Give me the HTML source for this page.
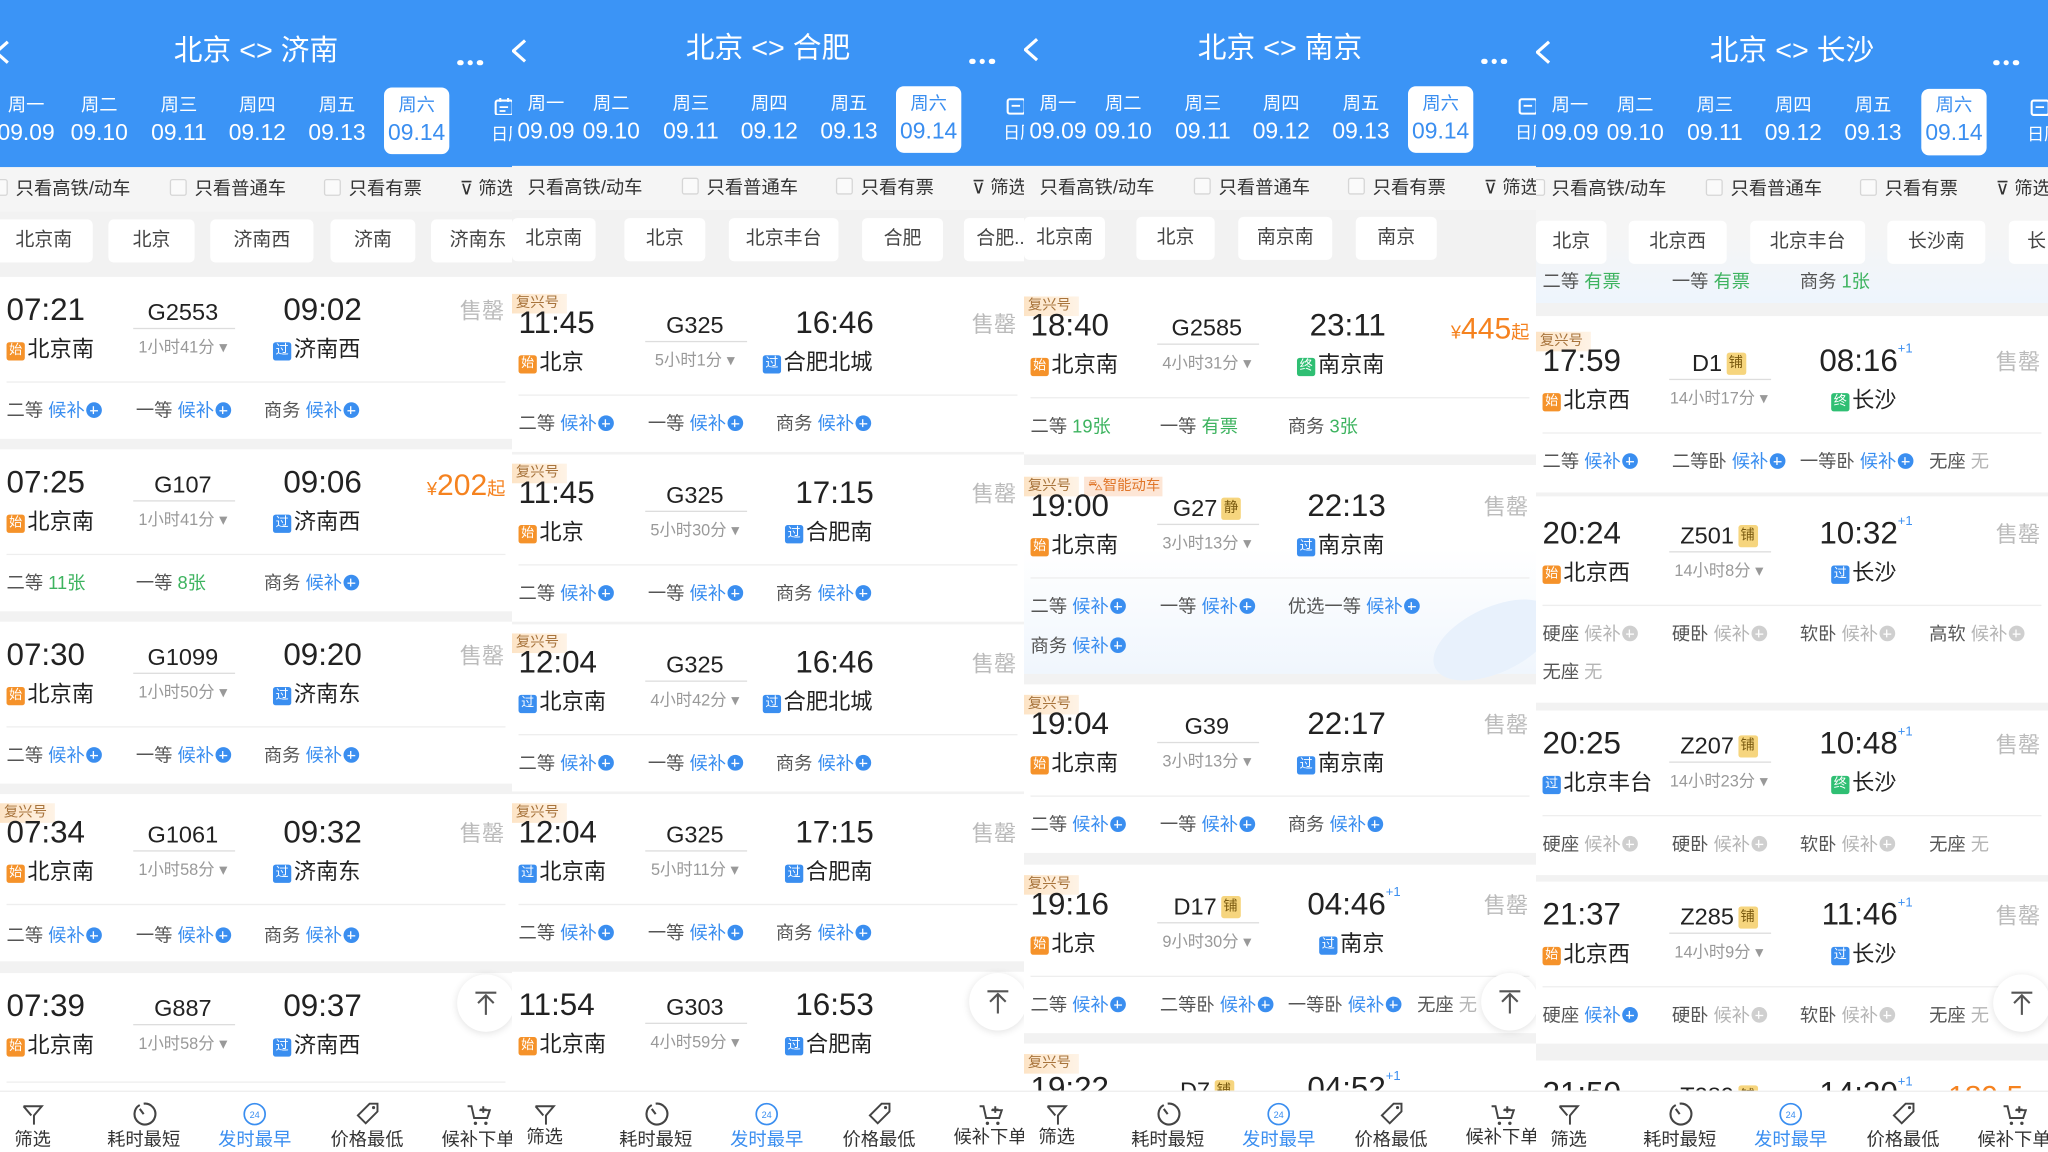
<!DOCTYPE html>
<html><head><meta charset="utf-8">
<style>
*{margin:0;padding:0;box-sizing:border-box}
html,body{width:2048px;height:1152px;overflow:hidden;background:#f2f2f2}
body{font-family:"Liberation Sans","Noto Sans CJK SC",sans-serif;position:relative}
#w{position:absolute;left:0;top:0;width:1568px;height:882px;overflow:hidden;transform:scale(1.30612);transform-origin:0 0}
.p{position:absolute;top:0;width:392px;height:882px;overflow:hidden;background:#f2f2f2}
.p div,.p span.a{position:absolute;white-space:nowrap}
.hd{left:0;top:0;width:392px;height:128px;background:#3b94f6}
.ti{left:0;width:392px;top:25px;text-align:center;color:#fff;font-size:22px;line-height:28px}
.dots{left:350px;top:37px;width:24px;height:5px}
.dots i{display:inline-block;width:4.5px;height:4.5px;border-radius:50%;background:#fff;margin-right:3px}
.wd{top:71px;width:56px;text-align:center;color:#fff;font-size:14px;line-height:18px}
.dd{top:90px;width:56px;text-align:center;color:#fff;font-size:17.5px;line-height:22px}
.sel{left:294px;top:67px;width:50px;height:51px;background:#fff;border-radius:6px}
.fr{left:0;top:128px;width:392px;height:34px;background:#f5f5f5}
.ft{top:135px;font-size:14px;color:#333;line-height:18px}
.cb{top:137px;width:13px;height:13px;border:1px solid #d6d6d6;background:#fafafa;border-radius:2px}
.ch{top:168px;height:33px;background:#fff;border-radius:4px;font-size:14.5px;color:#444;line-height:33px;text-align:center}
.c{left:0;width:392px;height:0}
.c .bg{left:0;width:392px;top:-28px;height:124px;background:#fff}
.tag{left:0;top:-25px;height:15px;width:42px;padding-left:3px;font-size:11px;line-height:15px;color:#a8743c;background:linear-gradient(90deg,#fde4c6,#fef3e6)}
.dt{left:5px;top:-16px;font-size:24px;line-height:28px;color:#222}
.tn{left:90px;width:100px;text-align:center;top:-12px;font-size:18px;line-height:22px;color:#222}
.ln{left:102px;width:78px;top:11px;height:1px;background:#ddd}
.du{left:90px;width:100px;text-align:center;top:18px;font-size:12.5px;color:#999;line-height:16px}
.at{right:115px;top:-16px;font-size:24px;line-height:28px;color:#222;text-align:right}
.at sup{position:absolute;left:100%;top:-1px;font-size:10px;color:#3a8ef0;line-height:12px}
.s1{left:5px;top:17px;font-size:17px;line-height:22px;color:#222}
.s2{right:116px;top:17px;font-size:17px;line-height:22px;color:#222}
.bd{display:inline-block;width:14px;height:14px;border-radius:2px;color:#fff;font-size:10px;line-height:14px;text-align:center;vertical-align:2px;margin-right:2px}
.o{background:#f5922a}.b{background:#3a8ef0}.gg{background:#2fbf73}
.jp{display:inline-block;width:15px;height:17px;border-radius:2px;background:#f6d57e;color:#7a5a10;font-size:11px;line-height:17px;text-align:center;vertical-align:3px;margin-left:3px}
.pr{right:6px;top:-12px;font-size:17px;color:#bbb;line-height:22px}
.pz{right:5px;top:-15px;color:#f5821f;font-size:23px;line-height:28px}
.pz small{font-size:14px}
.dv{left:5px;width:382px;top:52px;height:1px;background:#eee}
.s{left:0;width:392px;height:18px;font-size:14px;line-height:18px;color:#555}
.s i{position:absolute;font-style:normal;white-space:nowrap}
.h{color:#3a8ef0}.gn{color:#3db35f}.x{color:#b5b5b5}
u{display:inline-block;width:12px;height:12px;border-radius:50%;background:#3a8ef0;position:relative;vertical-align:-1px;margin-left:1px;text-decoration:none}
u:before{content:"";position:absolute;left:3px;top:5.5px;width:6px;height:1.2px;background:#fff}
u:after{content:"";position:absolute;left:5.4px;top:3px;width:1.2px;height:6px;background:#fff}
.x u{background:#cfcfcf}
.bar{left:0;top:835px;width:392px;height:47px;background:#fff;border-top:1px solid #eee}
.bi{top:845px;width:70px;text-align:center}
.bl{top:862px;width:70px;text-align:center;font-size:14px;color:#333;line-height:20px}
.up{width:44px;height:44px;border-radius:50%;background:#fff;box-shadow:0 1px 6px rgba(0,0,0,.12)}
.cal{top:72px;width:14px;height:14px}
</style></head><body><div id="w">

<!-- PANEL 1 -->
<div class="p" style="left:0">
<div class="hd"></div>
<svg class="a" style="position:absolute;left:-6px;top:30px" width="16" height="20"><polyline points="12,2 3,10 12,18" fill="none" stroke="#fff" stroke-width="2.4"/></svg>
<div class="ti">北京 &lt;&gt; 济南</div>
<div class="dots"><i></i><i></i><i></i></div>
<div class="sel"></div>
<div class="wd" style="left:-8px">周一</div><div class="dd" style="left:-8px">09.09</div>
<div class="wd" style="left:48px">周二</div><div class="dd" style="left:48px">09.10</div>
<div class="wd" style="left:109px">周三</div><div class="dd" style="left:109px">09.11</div>
<div class="wd" style="left:169px">周四</div><div class="dd" style="left:169px">09.12</div>
<div class="wd" style="left:230px">周五</div><div class="dd" style="left:230px">09.13</div>
<div class="wd" style="left:291px;color:#3a8ef0">周六</div><div class="dd" style="left:291px;color:#3a8ef0">09.14</div>
<svg class="cal" style="position:absolute;left:378px;top:74px" width="16" height="16"><rect x="1.5" y="3" width="13" height="11" rx="1.5" fill="none" stroke="#fff" stroke-width="1.6"/><line x1="5" y1="1" x2="5" y2="4" stroke="#fff" stroke-width="1.6"/><line x1="11" y1="1" x2="11" y2="4" stroke="#fff" stroke-width="1.6"/><line x1="4.5" y1="8" x2="11" y2="8" stroke="#fff" stroke-width="1.4"/><line x1="4.5" y1="11" x2="9" y2="11" stroke="#fff" stroke-width="1.4"/></svg>
<div style="left:376px;top:92px;color:#fff;font-size:13px">日历</div>
<div class="fr"></div>
<div class="cb" style="left:-7px"></div><div class="ft" style="left:12px">只看高铁/动车</div>
<div class="cb" style="left:130px"></div><div class="ft" style="left:149px">只看普通车</div>
<div class="cb" style="left:248px"></div><div class="ft" style="left:267px">只看有票</div>
<div class="ft" style="left:352px">&#x22BD; 筛选</div>
<div class="ch" style="left:-4px;width:75px">北京南</div>
<div class="ch" style="left:83px;width:66px">北京</div>
<div class="ch" style="left:161px;width:79px">济南西</div>
<div class="ch" style="left:253px;width:65px">济南</div>
<div class="ch" style="left:330px;width:72px">济南东</div>

<div class="c" style="top:240px"><div class="bg"></div>
<div class="dt">07:21</div><div class="tn">G2553</div><div class="ln"></div><div class="du">1小时41分 ▾</div><div class="at">09:02</div>
<div class="s1"><span class="bd o">始</span>北京南</div><div class="s2"><span class="bd b">过</span>济南西</div><div class="pr">售罄</div><div class="dv"></div>
<div class="s" style="top:65px"><i style="left:5px">二等 <span class="h">候补<u></u></span></i><i style="left:104px">一等 <span class="h">候补<u></u></span></i><i style="left:202px">商务 <span class="h">候补<u></u></span></i></div></div>

<div class="c" style="top:372px"><div class="bg"></div>
<div class="dt">07:25</div><div class="tn">G107</div><div class="ln"></div><div class="du">1小时41分 ▾</div><div class="at">09:06</div>
<div class="s1"><span class="bd o">始</span>北京南</div><div class="s2"><span class="bd b">过</span>济南西</div><div class="pz"><small>¥</small>202<small>起</small></div><div class="dv"></div>
<div class="s" style="top:65px"><i style="left:5px">二等 <span class="gn">11张</span></i><i style="left:104px">一等 <span class="gn">8张</span></i><i style="left:202px">商务 <span class="h">候补<u></u></span></i></div></div>

<div class="c" style="top:504px"><div class="bg"></div>
<div class="dt">07:30</div><div class="tn">G1099</div><div class="ln"></div><div class="du">1小时50分 ▾</div><div class="at">09:20</div>
<div class="s1"><span class="bd o">始</span>北京南</div><div class="s2"><span class="bd b">过</span>济南东</div><div class="pr">售罄</div><div class="dv"></div>
<div class="s" style="top:65px"><i style="left:5px">二等 <span class="h">候补<u></u></span></i><i style="left:104px">一等 <span class="h">候补<u></u></span></i><i style="left:202px">商务 <span class="h">候补<u></u></span></i></div></div>

<div class="c" style="top:640px"><div class="bg" style="top:-32px;height:128px"></div><div class="tag">复兴号</div>
<div class="dt">07:34</div><div class="tn">G1061</div><div class="ln"></div><div class="du">1小时58分 ▾</div><div class="at">09:32</div>
<div class="s1"><span class="bd o">始</span>北京南</div><div class="s2"><span class="bd b">过</span>济南东</div><div class="pr">售罄</div><div class="dv"></div>
<div class="s" style="top:67px"><i style="left:5px">二等 <span class="h">候补<u></u></span></i><i style="left:104px">一等 <span class="h">候补<u></u></span></i><i style="left:202px">商务 <span class="h">候补<u></u></span></i></div></div>

<div class="c" style="top:773px"><div class="bg"></div>
<div class="dt">07:39</div><div class="tn">G887</div><div class="ln"></div><div class="du">1小时58分 ▾</div><div class="at">09:37</div>
<div class="s1"><span class="bd o">始</span>北京南</div><div class="s2"><span class="bd b">过</span>济南西</div><div class="dv" style="top:55px"></div></div>
<div class="up" style="left:350px;top:746px"></div>
<svg style="position:absolute;left:362px;top:758px" width="20" height="20"><line x1="2" y1="2" x2="18" y2="2" stroke="#555" stroke-width="1.6"/><line x1="10" y1="4" x2="10" y2="19" stroke="#555" stroke-width="1.6"/><polyline points="4,10 10,4 16,10" fill="none" stroke="#555" stroke-width="1.6"/></svg>

<div class="bar"></div>
<svg class="a" style="position:absolute;left:16px;top:844px" width="18" height="18"><path d="M2 3H16L10 10V17M8 10L2 3" fill="none" stroke="#444" stroke-width="1.5"/></svg>
<svg class="a" style="position:absolute;left:100px;top:843px" width="20" height="20"><path d="M7 3A8 8 0 1 0 10 2" fill="none" stroke="#444" stroke-width="1.6"/><line x1="10" y1="10" x2="7" y2="6" stroke="#444" stroke-width="1.6"/></svg>
<svg class="a" style="position:absolute;left:185px;top:843px" width="20" height="20"><circle cx="10" cy="10" r="8" fill="none" stroke="#3a8ef0" stroke-width="1.3"/><text x="10" y="13" font-size="7" fill="#3a8ef0" text-anchor="middle" font-family="Liberation Sans">24</text></svg>
<svg class="a" style="position:absolute;left:271px;top:842px" width="22" height="22"><path d="M3 12L12 3H18V9L9 18Z" fill="none" stroke="#444" stroke-width="1.5"/><circle cx="15" cy="6" r="1.2" fill="#444"/></svg>
<svg class="a" style="position:absolute;left:356px;top:843px" width="22" height="22"><path d="M2 4H5L7 13H17L19 7H11M14 4V9M11.5 6.5H16.5" fill="none" stroke="#444" stroke-width="1.5"/><circle cx="8" cy="17" r="1.3" fill="#444"/><circle cx="16" cy="17" r="1.3" fill="#444"/></svg>
<div class="bl" style="left:-10px">筛选</div><div class="bl" style="left:75px">耗时最短</div><div class="bl" style="left:160px;color:#3a8ef0">发时最早</div><div class="bl" style="left:246px">价格最低</div><div class="bl" style="left:331px">候补下单</div>
</div>

<!-- PANEL 2 -->
<div class="p" style="left:392px">
<div class="hd"></div>
<svg style="position:absolute;left:-2px;top:29px" width="16" height="20"><polyline points="12,2 3,10 12,18" fill="none" stroke="#fff" stroke-width="2.4"/></svg>
<div class="ti" style="top:23px">北京 &lt;&gt; 合肥</div>
<div class="dots" style="top:36px"><i></i><i></i><i></i></div>
<div class="sel" style="top:66px"></div>
<div class="wd" style="left:-2px;top:70px">周一</div><div class="dd" style="left:-2px;top:89px">09.09</div>
<div class="wd" style="left:48px;top:70px">周二</div><div class="dd" style="left:48px;top:89px">09.10</div>
<div class="wd" style="left:109px;top:70px">周三</div><div class="dd" style="left:109px;top:89px">09.11</div>
<div class="wd" style="left:169px;top:70px">周四</div><div class="dd" style="left:169px;top:89px">09.12</div>
<div class="wd" style="left:230px;top:70px">周五</div><div class="dd" style="left:230px;top:89px">09.13</div>
<div class="wd" style="left:291px;top:70px;color:#3a8ef0">周六</div><div class="dd" style="left:291px;top:89px;color:#3a8ef0">09.14</div>
<svg style="position:absolute;left:378px;top:73px" width="16" height="16"><rect x="1.5" y="3" width="13" height="11" rx="1.5" fill="none" stroke="#fff" stroke-width="1.6"/><line x1="4.5" y1="8" x2="11" y2="8" stroke="#fff" stroke-width="1.4"/></svg>
<div style="left:376px;top:91px;color:#fff;font-size:13px">日历</div>
<div class="fr" style="top:127px"></div>
<div class="ft" style="left:12px;top:134px">只看高铁/动车</div>
<div class="cb" style="left:130px;top:136px"></div><div class="ft" style="left:149px;top:134px">只看普通车</div>
<div class="cb" style="left:248px;top:136px"></div><div class="ft" style="left:267px;top:134px">只看有票</div>
<div class="ft" style="left:352px;top:134px">&#x22BD; 筛选</div>
<div class="ch" style="left:0;width:64px;top:167px">北京南</div>
<div class="ch" style="left:86px;width:62px;top:167px">北京</div>
<div class="ch" style="left:166px;width:84px;top:167px">北京丰台</div>
<div class="ch" style="left:268px;width:62px;top:167px">合肥</div>
<div class="ch" style="left:346px;width:60px;top:167px">合肥...</div>

<div class="c" style="top:250px"><div class="bg" style="top:-38px;height:134px"></div><div class="tag">复兴号</div>
<div class="dt">11:45</div><div class="tn">G325</div><div class="ln"></div><div class="du">5小时1分 ▾</div><div class="at">16:46</div>
<div class="s1"><span class="bd o">始</span>北京</div><div class="s2"><span class="bd b">过</span>合肥北城</div><div class="pr">售罄</div><div class="dv"></div>
<div class="s" style="top:65px"><i style="left:5px">二等 <span class="h">候补<u></u></span></i><i style="left:104px">一等 <span class="h">候补<u></u></span></i><i style="left:202px">商务 <span class="h">候补<u></u></span></i></div></div>

<div class="c" style="top:380px"><div class="bg" style="top:-32px;height:128px"></div><div class="tag">复兴号</div>
<div class="dt">11:45</div><div class="tn">G325</div><div class="ln"></div><div class="du">5小时30分 ▾</div><div class="at">17:15</div>
<div class="s1"><span class="bd o">始</span>北京</div><div class="s2"><span class="bd b">过</span>合肥南</div><div class="pr">售罄</div><div class="dv"></div>
<div class="s" style="top:65px"><i style="left:5px">二等 <span class="h">候补<u></u></span></i><i style="left:104px">一等 <span class="h">候补<u></u></span></i><i style="left:202px">商务 <span class="h">候补<u></u></span></i></div></div>

<div class="c" style="top:510px"><div class="bg" style="top:-32px;height:128px"></div><div class="tag">复兴号</div>
<div class="dt">12:04</div><div class="tn">G325</div><div class="ln"></div><div class="du">4小时42分 ▾</div><div class="at">16:46</div>
<div class="s1"><span class="bd b">过</span>北京南</div><div class="s2"><span class="bd b">过</span>合肥北城</div><div class="pr">售罄</div><div class="dv"></div>
<div class="s" style="top:65px"><i style="left:5px">二等 <span class="h">候补<u></u></span></i><i style="left:104px">一等 <span class="h">候补<u></u></span></i><i style="left:202px">商务 <span class="h">候补<u></u></span></i></div></div>

<div class="c" style="top:640px"><div class="bg" style="top:-32px;height:128px"></div><div class="tag">复兴号</div>
<div class="dt">12:04</div><div class="tn">G325</div><div class="ln"></div><div class="du">5小时11分 ▾</div><div class="at">17:15</div>
<div class="s1"><span class="bd b">过</span>北京南</div><div class="s2"><span class="bd b">过</span>合肥南</div><div class="pr">售罄</div><div class="dv"></div>
<div class="s" style="top:65px"><i style="left:5px">二等 <span class="h">候补<u></u></span></i><i style="left:104px">一等 <span class="h">候补<u></u></span></i><i style="left:202px">商务 <span class="h">候补<u></u></span></i></div></div>

<div class="c" style="top:772px"><div class="bg"></div>
<div class="dt">11:54</div><div class="tn">G303</div><div class="ln"></div><div class="du">4小时59分 ▾</div><div class="at">16:53</div>
<div class="s1"><span class="bd o">始</span>北京南</div><div class="s2"><span class="bd b">过</span>合肥南</div><div class="pz"><small>¥</small>45</div></div>
<div class="up" style="left:350px;top:745px"></div>
<svg style="position:absolute;left:362px;top:757px" width="20" height="20"><line x1="2" y1="2" x2="18" y2="2" stroke="#555" stroke-width="1.6"/><line x1="10" y1="4" x2="10" y2="19" stroke="#555" stroke-width="1.6"/><polyline points="4,10 10,4 16,10" fill="none" stroke="#555" stroke-width="1.6"/></svg>

<div class="bar"></div>
<svg style="position:absolute;left:16px;top:844px" width="18" height="18"><path d="M2 3H16L10 10V17M8 10L2 3" fill="none" stroke="#444" stroke-width="1.5"/></svg>
<svg style="position:absolute;left:100px;top:843px" width="20" height="20"><path d="M7 3A8 8 0 1 0 10 2" fill="none" stroke="#444" stroke-width="1.6"/><line x1="10" y1="10" x2="7" y2="6" stroke="#444" stroke-width="1.6"/></svg>
<svg style="position:absolute;left:185px;top:843px" width="20" height="20"><circle cx="10" cy="10" r="8" fill="none" stroke="#3a8ef0" stroke-width="1.3"/><text x="10" y="13" font-size="7" fill="#3a8ef0" text-anchor="middle" font-family="Liberation Sans">24</text></svg>
<svg style="position:absolute;left:271px;top:842px" width="22" height="22"><path d="M3 12L12 3H18V9L9 18Z" fill="none" stroke="#444" stroke-width="1.5"/><circle cx="15" cy="6" r="1.2" fill="#444"/></svg>
<svg style="position:absolute;left:356px;top:843px" width="22" height="22"><path d="M2 4H5L7 13H17L19 7H11M14 4V9M11.5 6.5H16.5" fill="none" stroke="#444" stroke-width="1.5"/><circle cx="8" cy="17" r="1.3" fill="#444"/><circle cx="16" cy="17" r="1.3" fill="#444"/></svg>
<div class="bl" style="left:-10px;top:860px">筛选</div><div class="bl" style="left:75px">耗时最短</div><div class="bl" style="left:160px;color:#3a8ef0">发时最早</div><div class="bl" style="left:246px">价格最低</div><div class="bl" style="left:331px;top:860px">候补下单</div>
</div>

<!-- PANEL 3 -->
<div class="p" style="left:784px">
<div class="hd"></div>
<svg style="position:absolute;left:-2px;top:28px" width="16" height="20"><polyline points="12,2 3,10 12,18" fill="none" stroke="#fff" stroke-width="2.4"/></svg>
<div class="ti" style="top:23px">北京 &lt;&gt; 南京</div>
<div class="dots" style="top:36px"><i></i><i></i><i></i></div>
<div class="sel" style="top:66px"></div>
<div class="wd" style="left:-2px;top:70px">周一</div><div class="dd" style="left:-2px;top:89px">09.09</div>
<div class="wd" style="left:48px;top:70px">周二</div><div class="dd" style="left:48px;top:89px">09.10</div>
<div class="wd" style="left:109px;top:70px">周三</div><div class="dd" style="left:109px;top:89px">09.11</div>
<div class="wd" style="left:169px;top:70px">周四</div><div class="dd" style="left:169px;top:89px">09.12</div>
<div class="wd" style="left:230px;top:70px">周五</div><div class="dd" style="left:230px;top:89px">09.13</div>
<div class="wd" style="left:291px;top:70px;color:#3a8ef0">周六</div><div class="dd" style="left:291px;top:89px;color:#3a8ef0">09.14</div>
<svg style="position:absolute;left:378px;top:73px" width="16" height="16"><rect x="1.5" y="3" width="13" height="11" rx="1.5" fill="none" stroke="#fff" stroke-width="1.6"/><line x1="4.5" y1="8" x2="11" y2="8" stroke="#fff" stroke-width="1.4"/></svg>
<div style="left:376px;top:91px;color:#fff;font-size:13px">日历</div>
<div class="fr" style="top:127px"></div>
<div class="ft" style="left:12px;top:134px">只看高铁/动车</div>
<div class="cb" style="left:130px;top:136px"></div><div class="ft" style="left:149px;top:134px">只看普通车</div>
<div class="cb" style="left:248px;top:136px"></div><div class="ft" style="left:267px;top:134px">只看有票</div>
<div class="ft" style="left:352px;top:134px">&#x22BD; 筛选</div>
<div class="ch" style="left:0;width:62px;top:166px">北京南</div>
<div class="ch" style="left:86px;width:60px;top:166px">北京</div>
<div class="ch" style="left:164px;width:72px;top:166px">南京南</div>
<div class="ch" style="left:254px;width:62px;top:166px">南京</div>

<div class="c" style="top:252px"><div class="bg" style="top:-40px;height:136px"></div><div class="tag">复兴号</div>
<div class="dt">18:40</div><div class="tn">G2585</div><div class="ln"></div><div class="du">4小时31分 ▾</div><div class="at">23:11</div>
<div class="s1"><span class="bd o">始</span>北京南</div><div class="s2"><span class="bd gg">终</span>南京南</div><div class="pz"><small>¥</small>445<small>起</small></div><div class="dv"></div>
<div class="s" style="top:65px"><i style="left:5px">二等 <span class="gn">19张</span></i><i style="left:104px">一等 <span class="gn">有票</span></i><i style="left:202px">商务 <span class="gn">3张</span></i></div></div>

<div class="c" style="top:390px"><div class="bg" style="top:-34px;height:160px;background:linear-gradient(180deg,#fff 40%,#f0f6fd)"></div>
<div style="left:310px;top:75px;width:100px;height:50px;border-radius:50%;background:#e8f1fc;transform:rotate(-25deg)"></div>
<div class="tag">复兴号</div><div class="tag" style="left:46px;width:60px;color:#e0762a;background:#fde6d6">⛍智能动车</div>
<div class="dt">19:00</div><div class="tn">G27<span class="jp">静</span></div><div class="ln"></div><div class="du">3小时13分 ▾</div><div class="at">22:13</div>
<div class="s1"><span class="bd o">始</span>北京南</div><div class="s2"><span class="bd b">过</span>南京南</div><div class="pr">售罄</div><div class="dv"></div>
<div class="s" style="top:65px"><i style="left:5px">二等 <span class="h">候补<u></u></span></i><i style="left:104px">一等 <span class="h">候补<u></u></span></i><i style="left:202px">优选一等 <span class="h">候补<u></u></span></i></div>
<div class="s" style="top:95px"><i style="left:5px">商务 <span class="h">候补<u></u></span></i></div></div>

<div class="c" style="top:557px"><div class="bg" style="top:-33px;height:129px"></div><div class="tag">复兴号</div>
<div class="dt">19:04</div><div class="tn">G39</div><div class="ln"></div><div class="du">3小时13分 ▾</div><div class="at">22:17</div>
<div class="s1"><span class="bd o">始</span>北京南</div><div class="s2"><span class="bd b">过</span>南京南</div><div class="pr">售罄</div><div class="dv"></div>
<div class="s" style="top:65px"><i style="left:5px">二等 <span class="h">候补<u></u></span></i><i style="left:104px">一等 <span class="h">候补<u></u></span></i><i style="left:202px">商务 <span class="h">候补<u></u></span></i></div></div>

<div class="c" style="top:695px"><div class="bg" style="top:-33px;height:129px"></div><div class="tag">复兴号</div>
<div class="dt">19:16</div><div class="tn">D17<span class="jp">铺</span></div><div class="ln"></div><div class="du">9小时30分 ▾</div><div class="at">04:46<sup>+1</sup></div>
<div class="s1"><span class="bd o">始</span>北京</div><div class="s2"><span class="bd b">过</span>南京</div><div class="pr">售罄</div><div class="dv"></div>
<div class="s" style="top:65px"><i style="left:5px">二等 <span class="h">候补<u></u></span></i><i style="left:104px">二等卧 <span class="h">候补<u></u></span></i><i style="left:202px">一等卧 <span class="h">候补<u></u></span></i><i style="left:301px">无座 <span class="x">无</span></i></div></div>

<div class="c" style="top:836px"><div class="bg" style="top:-37px;height:129px"></div><div class="tag" style="top:-29px">复兴号</div>
<div class="dt">19:22</div><div class="tn">D7<span class="jp">铺</span></div><div class="at">04:52<sup>+1</sup></div></div>
<div class="up" style="left:350px;top:745px"></div>
<svg style="position:absolute;left:362px;top:757px" width="20" height="20"><line x1="2" y1="2" x2="18" y2="2" stroke="#555" stroke-width="1.6"/><line x1="10" y1="4" x2="10" y2="19" stroke="#555" stroke-width="1.6"/><polyline points="4,10 10,4 16,10" fill="none" stroke="#555" stroke-width="1.6"/></svg>

<div class="bar"></div>
<svg style="position:absolute;left:16px;top:844px" width="18" height="18"><path d="M2 3H16L10 10V17M8 10L2 3" fill="none" stroke="#444" stroke-width="1.5"/></svg>
<svg style="position:absolute;left:100px;top:843px" width="20" height="20"><path d="M7 3A8 8 0 1 0 10 2" fill="none" stroke="#444" stroke-width="1.6"/><line x1="10" y1="10" x2="7" y2="6" stroke="#444" stroke-width="1.6"/></svg>
<svg style="position:absolute;left:185px;top:843px" width="20" height="20"><circle cx="10" cy="10" r="8" fill="none" stroke="#3a8ef0" stroke-width="1.3"/><text x="10" y="13" font-size="7" fill="#3a8ef0" text-anchor="middle" font-family="Liberation Sans">24</text></svg>
<svg style="position:absolute;left:271px;top:842px" width="22" height="22"><path d="M3 12L12 3H18V9L9 18Z" fill="none" stroke="#444" stroke-width="1.5"/><circle cx="15" cy="6" r="1.2" fill="#444"/></svg>
<svg style="position:absolute;left:356px;top:843px" width="22" height="22"><path d="M2 4H5L7 13H17L19 7H11M14 4V9M11.5 6.5H16.5" fill="none" stroke="#444" stroke-width="1.5"/><circle cx="8" cy="17" r="1.3" fill="#444"/><circle cx="16" cy="17" r="1.3" fill="#444"/></svg>
<div class="bl" style="left:-10px;top:860px">筛选</div><div class="bl" style="left:75px">耗时最短</div><div class="bl" style="left:160px;color:#3a8ef0">发时最早</div><div class="bl" style="left:246px">价格最低</div><div class="bl" style="left:331px;top:860px">候补下单</div>
</div>

<!-- PANEL 4 -->
<div class="p" style="left:1176px">
<div class="hd"></div>
<svg style="position:absolute;left:-2px;top:30px" width="16" height="20"><polyline points="12,2 3,10 12,18" fill="none" stroke="#fff" stroke-width="2.4"/></svg>
<div class="ti">北京 &lt;&gt; 长沙</div>
<div class="dots"><i></i><i></i><i></i></div>
<div class="sel" style="left:295px;top:68px"></div>
<div class="wd" style="left:-2px">周一</div><div class="dd" style="left:-2px">09.09</div>
<div class="wd" style="left:48px">周二</div><div class="dd" style="left:48px">09.10</div>
<div class="wd" style="left:109px">周三</div><div class="dd" style="left:109px">09.11</div>
<div class="wd" style="left:169px">周四</div><div class="dd" style="left:169px">09.12</div>
<div class="wd" style="left:230px">周五</div><div class="dd" style="left:230px">09.13</div>
<div class="wd" style="left:292px;color:#3a8ef0">周六</div><div class="dd" style="left:292px;color:#3a8ef0">09.14</div>
<svg style="position:absolute;left:378px;top:74px" width="16" height="16"><rect x="1.5" y="3" width="13" height="11" rx="1.5" fill="none" stroke="#fff" stroke-width="1.6"/><line x1="4.5" y1="8" x2="11" y2="8" stroke="#fff" stroke-width="1.4"/></svg>
<div style="left:376px;top:92px;color:#fff;font-size:13px">日历</div>
<div class="fr" style="top:128px"></div>
<div class="cb" style="left:-6px"></div><div class="ft" style="left:12px">只看高铁/动车</div>
<div class="cb" style="left:130px"></div><div class="ft" style="left:149px">只看普通车</div>
<div class="cb" style="left:248px"></div><div class="ft" style="left:267px">只看有票</div>
<div class="ft" style="left:352px">&#x22BD; 筛选</div>
<div class="c" style="top:215px"><div class="bg" style="top:-55px;height:72px;background:linear-gradient(180deg,#f5f5f5 30%,#eef5fd)"></div>
<div class="s" style="top:-9px"><i style="left:5px">二等 <span class="gn">有票</span></i><i style="left:104px">一等 <span class="gn">有票</span></i><i style="left:202px">商务 <span class="gn">1张</span></i></div></div>
<div class="ch" style="left:0;width:54px;top:169px">北京</div>
<div class="ch" style="left:71px;width:75px;top:169px">北京西</div>
<div class="ch" style="left:164px;width:88px;top:169px">北京丰台</div>
<div class="ch" style="left:269px;width:75px;top:169px">长沙南</div>
<div class="ch" style="left:362px;width:60px;top:169px;text-align:left;padding-left:14px">长</div>

<div class="c" style="top:279px"><div class="bg" style="top:-37px;height:135px"></div><div class="tag">复兴号</div>
<div class="dt">17:59</div><div class="tn">D1<span class="jp">铺</span></div><div class="ln"></div><div class="du">14小时17分 ▾</div><div class="at">08:16<sup>+1</sup></div>
<div class="s1"><span class="bd o">始</span>北京西</div><div class="s2"><span class="bd gg">终</span>长沙</div><div class="pr">售罄</div><div class="dv"></div>
<div class="s" style="top:65px"><i style="left:5px">二等 <span class="h">候补<u></u></span></i><i style="left:104px">二等卧 <span class="h">候补<u></u></span></i><i style="left:202px">一等卧 <span class="h">候补<u></u></span></i><i style="left:301px">无座 <span class="x">无</span></i></div></div>

<div class="c" style="top:411px"><div class="bg" style="top:-31px;height:158px"></div>
<div class="dt">20:24</div><div class="tn">Z501<span class="jp">铺</span></div><div class="ln"></div><div class="du">14小时8分 ▾</div><div class="at">10:32<sup>+1</sup></div>
<div class="s1"><span class="bd o">始</span>北京西</div><div class="s2"><span class="bd b">过</span>长沙</div><div class="pr">售罄</div><div class="dv"></div>
<div class="s" style="top:65px"><i style="left:5px">硬座 <span class="x">候补<u></u></span></i><i style="left:104px">硬卧 <span class="x">候补<u></u></span></i><i style="left:202px">软卧 <span class="x">候补<u></u></span></i><i style="left:301px">高软 <span class="x">候补<u></u></span></i></div>
<div class="s" style="top:94px"><i style="left:5px">无座 <span class="x">无</span></i></div></div>

<div class="c" style="top:572px"><div class="bg" style="top:-28px;height:126px"></div>
<div class="dt">20:25</div><div class="tn">Z207<span class="jp">铺</span></div><div class="ln"></div><div class="du">14小时23分 ▾</div><div class="at">10:48<sup>+1</sup></div>
<div class="s1"><span class="bd b">过</span>北京丰台</div><div class="s2"><span class="bd gg">终</span>长沙</div><div class="pr">售罄</div><div class="dv"></div>
<div class="s" style="top:65px"><i style="left:5px">硬座 <span class="x">候补<u></u></span></i><i style="left:104px">硬卧 <span class="x">候补<u></u></span></i><i style="left:202px">软卧 <span class="x">候补<u></u></span></i><i style="left:301px">无座 <span class="x">无</span></i></div></div>

<div class="c" style="top:703px"><div class="bg" style="top:-28px;height:124px"></div>
<div class="dt">21:37</div><div class="tn">Z285<span class="jp">铺</span></div><div class="ln"></div><div class="du">14小时9分 ▾</div><div class="at">11:46<sup>+1</sup></div>
<div class="s1"><span class="bd o">始</span>北京西</div><div class="s2"><span class="bd b">过</span>长沙</div><div class="pr">售罄</div><div class="dv"></div>
<div class="s" style="top:65px"><i style="left:5px">硬座 <span class="h">候补<u></u></span></i><i style="left:104px">硬卧 <span class="x">候补<u></u></span></i><i style="left:202px">软卧 <span class="x">候补<u></u></span></i><i style="left:301px">无座 <span class="x">无</span></i></div></div>

<div class="c" style="top:840px"><div class="bg"></div>
<div class="dt">21:50</div><div class="tn">T289<span class="jp">铺</span></div><div class="at">14:20<sup>+1</sup></div><div class="pz"><small>¥</small>189.5<small>起</small></div></div>
<div class="up" style="left:350px;top:746px"></div>
<svg style="position:absolute;left:362px;top:758px" width="20" height="20"><line x1="2" y1="2" x2="18" y2="2" stroke="#555" stroke-width="1.6"/><line x1="10" y1="4" x2="10" y2="19" stroke="#555" stroke-width="1.6"/><polyline points="4,10 10,4 16,10" fill="none" stroke="#555" stroke-width="1.6"/></svg>

<div class="bar"></div>
<svg style="position:absolute;left:16px;top:844px" width="18" height="18"><path d="M2 3H16L10 10V17M8 10L2 3" fill="none" stroke="#444" stroke-width="1.5"/></svg>
<svg style="position:absolute;left:100px;top:843px" width="20" height="20"><path d="M7 3A8 8 0 1 0 10 2" fill="none" stroke="#444" stroke-width="1.6"/><line x1="10" y1="10" x2="7" y2="6" stroke="#444" stroke-width="1.6"/></svg>
<svg style="position:absolute;left:185px;top:843px" width="20" height="20"><circle cx="10" cy="10" r="8" fill="none" stroke="#3a8ef0" stroke-width="1.3"/><text x="10" y="13" font-size="7" fill="#3a8ef0" text-anchor="middle" font-family="Liberation Sans">24</text></svg>
<svg style="position:absolute;left:271px;top:842px" width="22" height="22"><path d="M3 12L12 3H18V9L9 18Z" fill="none" stroke="#444" stroke-width="1.5"/><circle cx="15" cy="6" r="1.2" fill="#444"/></svg>
<svg style="position:absolute;left:356px;top:843px" width="22" height="22"><path d="M2 4H5L7 13H17L19 7H11M14 4V9M11.5 6.5H16.5" fill="none" stroke="#444" stroke-width="1.5"/><circle cx="8" cy="17" r="1.3" fill="#444"/><circle cx="16" cy="17" r="1.3" fill="#444"/></svg>
<div class="bl" style="left:-10px">筛选</div><div class="bl" style="left:75px">耗时最短</div><div class="bl" style="left:160px;color:#3a8ef0">发时最早</div><div class="bl" style="left:246px">价格最低</div><div class="bl" style="left:331px">候补下单</div>
</div>

</div></body></html>
